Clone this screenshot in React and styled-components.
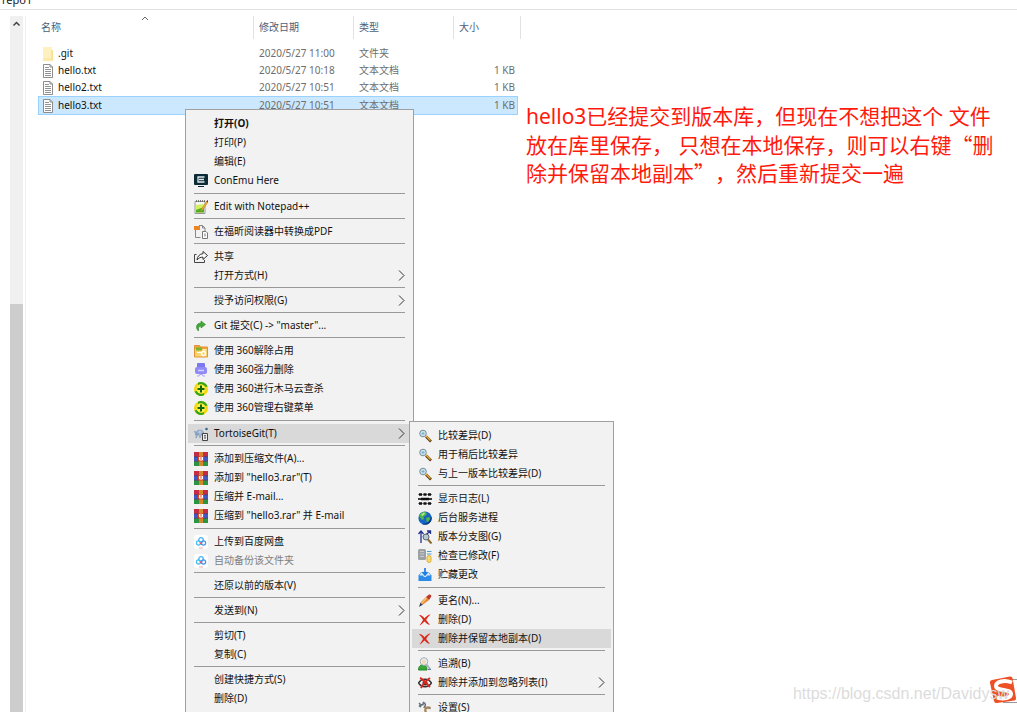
import { Fragment } from "react";
import styled, { createGlobalStyle } from "styled-components";

const files = [
  { name: ".git", date: "2020/5/27 11:00", type: "文件夹", size: "", folder: true },
  { name: "hello.txt", date: "2020/5/27 10:18", type: "文本文档", size: "1 KB" },
  { name: "hello2.txt", date: "2020/5/27 10:51", type: "文本文档", size: "1 KB" },
  { name: "hello3.txt", date: "2020/5/27 10:51", type: "文本文档", size: "1 KB", selected: true },
];

// every inner array is one group, groups are divided by a separator
const fileMenu = [
  [
    { label: "打开(O)", bold: true },
    { label: "打印(P)" },
    { label: "编辑(E)" },
    { label: "ConEmu Here", icon: "conemu" },
  ],
  [{ label: "Edit with Notepad++", icon: "notepad" }],
  [{ label: "在福昕阅读器中转换成PDF", icon: "pdf" }],
  [{ label: "共享", icon: "share" }, { label: "打开方式(H)", arrow: true }],
  [{ label: "授予访问权限(G)", arrow: true }],
  [{ label: 'Git 提交(C) -> "master"...', icon: "commit" }],
  [
    { label: "使用 360解除占用", icon: "folder360" },
    { label: "使用 360强力删除", icon: "shredder" },
    { label: "使用 360进行木马云查杀", icon: "plus360" },
    { label: "使用 360管理右键菜单", icon: "plus360" },
  ],
  [{ label: "TortoiseGit(T)", icon: "tortoise", arrow: true, active: true }],
  [
    { label: "添加到压缩文件(A)...", icon: "rar" },
    { label: '添加到 "hello3.rar"(T)', icon: "rar" },
    { label: "压缩并 E-mail...", icon: "rar" },
    { label: '压缩到 "hello3.rar" 并 E-mail', icon: "rar" },
  ],
  [
    { label: "上传到百度网盘", icon: "baidu" },
    { label: "自动备份该文件夹", icon: "baidu", disabled: true },
  ],
  [{ label: "还原以前的版本(V)" }],
  [{ label: "发送到(N)", arrow: true }],
  [{ label: "剪切(T)" }, { label: "复制(C)" }],
  [{ label: "创建快捷方式(S)" }, { label: "删除(D)" }],
];

const tortoiseMenu = [
  [
    { label: "比较差异(D)", icon: "diff" },
    { label: "用于稍后比较差异", icon: "diff" },
    { label: "与上一版本比较差异(D)", icon: "diff" },
  ],
  [
    { label: "显示日志(L)", icon: "log" },
    { label: "后台服务进程", icon: "globe" },
    { label: "版本分支图(G)", icon: "graph" },
    { label: "检查已修改(F)", icon: "check" },
    { label: "贮藏更改", icon: "stash" },
  ],
  [
    { label: "更名(N)...", icon: "rename" },
    { label: "删除(D)", icon: "remove" },
    { label: "删除并保留本地副本(D)", icon: "remove", active: true },
  ],
  [
    { label: "追溯(B)", icon: "blame" },
    { label: "删除并添加到忽略列表(I)", icon: "ignore", arrow: true },
  ],
  [{ label: "设置(S)", icon: "settings" }],
];

const icons = {
  conemu: (
    <>
      <rect x="0" y="0" width="14" height="11" rx="1" fill="#0d2b36" />
      <path d="M10.500 3H4v5h6.500M5 5.500h5" fill="none" stroke="#dfe9ec" strokeWidth="1.300" />
      <path d="M4 12.500h6" stroke="#0d2b36" />
    </>
  ),
  notepad: (
    <>
      <path d="M1 1.500h10v12H1z" fill="#f7f7f2" stroke="#999" />
      <path d="M2 1h9" stroke="#555" strokeWidth="1.500" strokeDasharray="1 1" />
      <path d="M2 5l8-1v8.500H2z" fill="#d3ee62" />
      <path d="M2 10l8-3v5.500H2z" fill="#4fae22" />
      <path d="M13 1L7.500 9l-1 2.500L9 9.500 14 2z" fill="#f0b429" stroke="#b07a22" strokeWidth=".5" />
      <path d="M12.200 1.500L13.500 0l1 .8-.8 1.700z" fill="#b12020" />
    </>
  ),
  pdf: (
    <>
      <path d="M1.500 4v8.500h5M5 .5h3.500L11 3v3" fill="none" stroke="#888" />
      <path d="M8.500.5V3H11" fill="none" stroke="#888" />
      <rect x="0" y="1" width="6" height="4" fill="#ee8420" />
      <path d="M8.500 6.500H12L13.500 8v5.500h-5z" fill="#fff" stroke="#777" />
      <path d="M11 8.500v3" stroke="#777" />
    </>
  ),
  share: (
    <>
      <path d="M2.500 4.500H.5v8h10V10" fill="none" stroke="#444" />
      <path d="M9 1.500l4.500 4L9 9.500V7.200C6.500 7 4.500 8 3 10c.3-3.500 2.500-6 6-6.300z" fill="#fafafa" stroke="#333" strokeLinejoin="round" />
    </>
  ),
  commit: (
    <path d="M7 2l4.500 3.500L7 9V7C5 7 4.200 8.500 4.500 12 1.500 9.500 1.500 4.300 7 4z" fill="#3fab36" stroke="#2b7f2a" strokeWidth=".6" />
  ),
  folder360: (
    <>
      <path d="M.5 1.500h5l1 1.500h7v10H.5z" fill="#f3a43a" stroke="#e09238" />
      <path d="M1 5h12v7.500H1z" fill="#fbd26b" />
      <path d="M2 3.500h6v3H2z" fill="#77b52d" />
      <path d="M3 8.500h4M9 6h3" stroke="#fff" />
      <circle cx="9.500" cy="9.500" r="2" fill="none" stroke="#fff" strokeWidth="1.300" />
    </>
  ),
  shredder: (
    <>
      <rect x="3" y="0" width="8" height="7" rx="1" fill="#7d78f0" />
      <rect x="1" y="4" width="12" height="7" rx="2" fill="#8f8af5" />
      <path d="M4 7.500h6" stroke="#d4d2ff" strokeWidth="1.500" />
      <path d="M3 13h2l.5-1.500h3L9 13h2" fill="none" stroke="#a9a5f6" />
    </>
  ),
  plus360: (
    <>
      <circle cx="7" cy="7" r="7" fill="#f3d60c" />
      <path d="M4 .7A7 7 0 0 1 13.500 4.500L11 5A5 5 0 0 0 4 3zM10 13.300A7 7 0 0 1 .5 9.500L3 9a5 5 0 0 0 7 2z" fill="#35a51b" />
      <circle cx="7" cy="7" r="4.500" fill="#fdf04a" />
      <path d="M7 3.500v7M3.500 7h7" stroke="#12660f" strokeWidth="2" />
    </>
  ),
  tortoise: (
    <>
      <path d="M1.500 8c0-3 2-5 4.500-5s4 2 4 5z" fill="#8ba6c9" stroke="#7590b5" strokeWidth=".7" />
      <path d="M3.500 5h5M6 3v5" stroke="#c5d6eb" />
      <path d="M0 4.500l2 1M3 8l-1 3M6 8v3" stroke="#8ba3c4" strokeWidth="1.500" />
      <circle cx="12.500" cy="2" r="1.300" fill="#3d648f" />
      <path d="M8.500 6.500h5v7h-5z" fill="#eee" stroke="#444" />
      <path d="M10 8.500h2M10 11h2M11 8.500v3" stroke="#555" strokeWidth=".8" />
    </>
  ),
  rar: (
    <>
      <rect width="14" height="4.700" fill="#c62b45" />
      <rect y="4.700" width="14" height="4.600" fill="#4259c4" />
      <rect y="9.300" width="14" height="4.700" fill="#2a9440" />
      <path d="M0 4.700h14M0 9.300h14" stroke="#3b173b" strokeWidth=".6" />
      <rect x="5" width="4" height="14" fill="#d58828" />
      <rect x="4" y="4" width="6" height="5.500" rx="1" fill="#e0431f" />
      <path d="M5.500 5v3h3V5M7 4.500v3" fill="none" stroke="#fff" />
    </>
  ),
  baidu: (
    <>
      <rect width="14" height="14" rx="3" fill="#fff" />
      <circle cx="7" cy="5" r="2.300" fill="none" stroke="#47b2f7" strokeWidth="1.300" />
      <circle cx="4.500" cy="8" r="2.100" fill="none" stroke="#43bdf5" strokeWidth="1.300" />
      <circle cx="9.500" cy="8" r="2.100" fill="none" stroke="#4795ee" strokeWidth="1.300" />
      <path d="M6 7.500L8 9.500" stroke="#ef5b70" strokeWidth="1.400" />
      <path d="M5 13h4" stroke="#f3a9b1" />
    </>
  ),
  diff: (
    <>
      <path d="M8 7.500l5 5" stroke="#5b3a12" strokeWidth="2.600" />
      <path d="M8 7l4.500 4.500" stroke="#e5a93b" strokeWidth="1.400" />
      <circle cx="5" cy="4.500" r="3.300" fill="#c3e5f2" stroke="#7b8b94" />
      <path d="M3.500 4.500h3M5 3v3" stroke="#78a3bb" strokeWidth=".8" />
    </>
  ),
  log: (
    <>
      <path d="M0 2.500h14M0 7h14M0 11.500h14" stroke="#888" />
      <path d="M1 2.500h3M5.500 2.500h3M10 2.500h3M3 7h8M1 11.500h3M5.500 11.500h3M10 11.500h3" stroke="#111" strokeWidth="2.300" />
      <path d="M0 7h14" stroke="#111" strokeWidth="1.500" />
    </>
  ),
  globe: (
    <>
      <circle cx="7" cy="7" r="6.600" fill="#1765c4" />
      <path d="M1 5C2.500 1.500 5 .5 7.500.8L9 3 7 5l-1.500.5L6 8l-2 1zM8 7l3-1 1.500 2-1.500 3.500L9 12z" fill="#4bb749" />
      <path d="M3 3.500l3-2 1 1L4.500 5z" fill="#b9e79b" />
      <path d="M13.400 5A6.600 6.600 0 0 1 4 12.900C9 13 12 10 13.400 5" fill="#093a82" />
    </>
  ),
  graph: (
    <>
      <path d="M3 13V1M.5 4L3 1l2.500 3M9 1h3.500v3M12.500 1L5 7" fill="none" stroke="#26308f" strokeWidth="1.300" />
      <circle cx="8" cy="7" r="3" fill="#b5c8d3" stroke="#5d6770" />
      <path d="M10 9.500l3.500 4" stroke="#8a6830" strokeWidth="2" />
    </>
  ),
  check: (
    <>
      <rect x="0" y="0" width="8" height="11" rx="1.500" fill="#9da1a3" />
      <path d="M2 2.500h4M2 5h4M2 7.500h4" stroke="#c9cccc" />
      <path d="M9 2.500h4.500M9 5h4.500" stroke="#4b9fce" strokeWidth="1.200" />
      <rect x="9" y="6.500" width="4" height="7" rx="2" fill="#f8dd6c" stroke="#dcae3d" />
    </>
  ),
  stash: (
    <>
      <path d="M.500 7.500L3 4.500h8l2.500 3V13H.500z" fill="#2d8be8" />
      <path d="M1.500 7.500H5L6 9h2l1-1.500h3.500L11 5H3z" fill="#d5eafd" />
      <path d="M7 0v6M4.500 4L7 7l2.500-3" fill="none" stroke="#197ce0" strokeWidth="1.700" />
    </>
  ),
  rename: (
    <>
      <path d="M1 13l1.500-4.500 2.500 2z" fill="#303b5a" />
      <path d="M2.500 8.500L8 3l3 3-6 4.500z" fill="#e8862a" />
      <path d="M3 9l5-5.500 1 1L4 10z" fill="#fac277" />
      <path d="M8 3l3-2.500c1.500-.5 3 1 2 2.500l-2 3z" fill="#bb382b" />
    </>
  ),
  remove: (
    <path d="M1 2c2-.5 4 1.500 5.500 3.200C8 3.500 10.500 1.500 12.500 1.500 11 3 9 5 8.200 7c1.300 2 2.500 3 3.800 5-2.500-.5-4-2-5.500-3.500C5 10 3.500 11.500 1.500 12.500c1.500-2 2.300-3.500 3.500-5.500C4 5 2.500 3.500 1 2" fill="#d92b1d" />
  ),
  blame: (
    <>
      <path d="M.5 13C.5 9 3 7.500 5 8c2 0 4 1 4 5z" fill="#38a936" stroke="#248426" />
      <circle cx="6" cy="4.500" r="3.800" fill="#e8edf0" stroke="#a9b0b5" />
      <path d="M4 5c0-3 4-3 4 0L7 7.500H5z" fill="#f5d9b7" />
      <path d="M8.500 7.500l4 5" stroke="#a6b2c0" strokeWidth="2" />
      <path d="M10 12.500h3" stroke="#667b9b" />
    </>
  ),
  ignore: (
    <>
      <path d="M.5 7c3-5 10-5 13 0-3 5-10 5-13 0z" fill="#eee" stroke="#333" strokeWidth="1.500" />
      <circle cx="7" cy="7" r="2.500" fill="#333" />
      <path d="M2 2c3 1 7 6 10 9M12 2C9 4 5 8 3 12" fill="none" stroke="#d82920" strokeWidth="2" />
    </>
  ),
  settings: (
    <>
      <path d="M1 2l2 2 2-.5.500-2C8 2 7.500 5 6.500 6l6 1.500M3 6L1 4.500" fill="none" stroke="#68727f" strokeWidth="1.600" />
      <path d="M12.500 7C8 5 5.500 8 9 13.500" fill="none" stroke="#a98658" strokeWidth="2.300" />
    </>
  ),
};

const Glyph = ({ name }) => (
  <Icon viewBox="0 0 14 14" aria-hidden="true">
    {icons[name]}
  </Icon>
);

const FileIcon = ({ folder }) => (
  <FileSvg viewBox="0 0 12 14" aria-hidden="true">
    {folder ? (
      <>
        <path d="M1 0h9v3h1v11H1z" fill="#ffe9a6" />
        <path d="M1 0h9v11H1z" fill="#fff0bf" />
        <path d="M10 3v10" stroke="#f3d88b" />
      </>
    ) : (
      <>
        <path d="M1.500.5H8L10.500 3v10.500h-9z" fill="#fff" stroke="#8d8d8d" />
        <path d="M8 .5V3h2.500" fill="none" stroke="#8d8d8d" />
        <path d="M3 3.500h4M3 5.500h6M3 7.500h6M3 9.500h6M3 11.500h6" stroke="#929292" />
      </>
    )}
  </FileSvg>
);

const ContextMenu = ({ groups, label, className }) => (
  <Menu className={className} role="menu" aria-label={label}>
    {groups.map((group, index) => (
      <Fragment key={index}>
        {index > 0 && <Separator $wide={groups[index - 1].length > 3} />}
        {group.map((item, i) => (
          <MenuItem
            key={i}
            type="button"
            role="menuitem"
            disabled={item.disabled}
            $active={item.active}
            $bold={item.bold}
          >
            <Glyph name={item.icon} />
            <span>{item.label}</span>
            {item.arrow && (
              <Chevron viewBox="0 0 7 11" aria-hidden="true">
                <path d="M1 .500l5 5-5 5" fill="none" stroke="#333" />
              </Chevron>
            )}
          </MenuItem>
        ))}
      </Fragment>
    ))}
  </Menu>
);

const App = () => {
  return (
    <Page lang="zh-CN">
      <GlobalStyle />
      <TitleBar>repo1</TitleBar>
      <Explorer>
        <ScrollBar>
          <svg width="13" height="16" viewBox="0 0 13 16" aria-hidden="true">
            <path d="M3.500 9.500l3-3 3 3" fill="none" stroke="#444" strokeWidth="1.500" />
          </svg>
          <Track />
          <Thumb />
        </ScrollBar>
        <FileArea>
          <FileTable>
            <colgroup>
              <col width="216" />
              <col width="100" />
              <col width="100" />
              <col width="64" />
              <col width="3" />
            </colgroup>
            <thead>
              <tr>
                <NameHead>
                  名称
                  <SortMark viewBox="0 0 8 5" aria-hidden="true">
                    <path d="M1 4l3-3 3 3" fill="none" stroke="#666" />
                  </SortMark>
                </NameHead>
                <Head>修改日期</Head>
                <Head>类型</Head>
                <Head $open>大小</Head>
                <Head as="td" />
              </tr>
            </thead>
            <tbody>
              {files.map((file) => (
                <FileRow key={file.name} $selected={file.selected}>
                  <NameCell>
                    <FileName>
                      <FileIcon folder={file.folder} />
                      {file.name}
                    </FileName>
                  </NameCell>
                  <Cell>{file.date}</Cell>
                  <Cell>{file.type}</Cell>
                  <SizeCell>{file.size}</SizeCell>
                </FileRow>
              ))}
            </tbody>
          </FileTable>
        </FileArea>
      </Explorer>

      <Note>
        <span>hello3已经提交到版本库，但现在不想把这个 文件</span>
        <span>
          放在库里保存， 只想在本地保存，则可以右键<Quote>“</Quote>删
        </span>
        <span>
          除并保留本地副本<Quote>”</Quote>，然后重新提交一遍
        </span>
      </Note>

      <FileMenu groups={fileMenu} label="hello3.txt" />
      <TortoiseMenu groups={tortoiseMenu} label="TortoiseGit" />

      <Logo viewBox="0 0 28 28" aria-hidden="true">
        <path d="M14 3.500h14M14 26.500h14" stroke="#999" />
        <path d="M3 4L21 .5q2-.3 2.500 1.500L27 22q.3 2-1.500 2.500L8 27q-2.500.5-3-2L1 7q-.5-2.500 2-3z" fill="#ee4f24" />
        <path d="M23 6.500C15 3.500 7 5.500 7 10c0 5.500 15 2.500 15 8 0 4-7 5.500-14 3.500" fill="none" stroke="#fff" strokeWidth="4" />
      </Logo>
      <Watermark>https://blog.csdn.net/Davidysw</Watermark>
    </Page>
  );
};

export default App;

const GlobalStyle = createGlobalStyle`
  * {
    box-sizing: border-box;
  }

  body {
    margin: 0;
    background: #fff;
    font-family: "Noto Sans", "Noto Sans CJK SC", sans-serif;
    font-size: 10px;
  }
`;

const Page = styled.main`
  position: relative;
  display: flex;
  flex-direction: column;
  height: 100vh;
  overflow: hidden;
`;

const TitleBar = styled.header`
  display: flex;
  flex: none;
  align-items: flex-end;
  height: 10px;
  padding: 0 2px 2px;
  border-bottom: 1px solid #e2e2e2;
  font-size: 11px;
  line-height: 14px;
  color: #222;
`;

const Explorer = styled.div`
  display: flex;
  flex: 1;
  padding: 6px 0 0 10px;
`;

const ScrollBar = styled.div`
  display: flex;
  flex-direction: column;
  width: 13px;
  background: #f0f0f0;
`;

const Track = styled.div`
  flex: 2;
`;

const Thumb = styled.div`
  flex: 3;
  background: #cdcdcd;
`;

const FileArea = styled.section`
  flex: 1;
  margin-left: 2px;
  padding-left: 12px;
  border-left: 1px solid #f0f0f0;
`;

const FileTable = styled.table`
  table-layout: fixed;
  width: 483px;
  border-spacing: 0;
  line-height: 17px;
  color: #6d6d6d;

  thead::after {
    content: "";
    display: block;
    height: 6px;
  }
`;

const Head = styled.th`
  height: 23px;
  padding: 0 0 0 5px;
  border-right: 1px solid ${({ $open }) => ($open ? "transparent" : "#e2e2e2")};
  font-weight: 400;
  text-align: left;
  color: #4c607a;
`;

const NameHead = styled(Head)`
  position: relative;
  padding-left: 3px;
`;

const SortMark = styled.svg`
  position: absolute;
  top: 0;
  left: 103px;
  width: 8px;
  height: 5px;
`;

const Cell = styled.td`
  padding: 0 0 0 5px;
  white-space: nowrap;
`;

const NameCell = styled(Cell)`
  padding-left: 4px;
  color: #111;
`;

const SizeCell = styled(Cell)`
  padding-right: 3px;
  text-align: right;
`;

const FileRow = styled.tr`
  ${Cell}, ${NameCell}, ${SizeCell} {
    background: ${({ $selected }) => ($selected ? "#cce8ff" : "transparent")};
    border: 0 solid #99d1ff;
    border-width: ${({ $selected }) => ($selected ? "1px 0" : "0")};
  }

  ${NameCell} {
    border-left-width: ${({ $selected }) => ($selected ? "1px" : "0")};
    padding-left: ${({ $selected }) => ($selected ? "3px" : "4px")};
  }

  ${SizeCell} {
    border-right-width: ${({ $selected }) => ($selected ? "1px" : "0")};
    padding-right: ${({ $selected }) => ($selected ? "2px" : "3px")};
  }
`;

const FileName = styled.div`
  display: flex;
  align-items: center;
  gap: 4px;
`;

const FileSvg = styled.svg`
  width: 12px;
  height: 14px;
`;

const Note = styled.p`
  position: absolute;
  top: 102px;
  left: 526px;
  display: grid;
  grid-auto-rows: 28px;
  margin: 0;
  font-size: 21px;
  line-height: 28px;
  white-space: nowrap;
  text-spacing-trim: space-all;
  color: #ff1a0d;
`;

const Quote = styled.span`
  font-family: "Noto Sans CJK SC", sans-serif;
`;

const Menu = styled.div`
  position: absolute;
  display: flex;
  flex-direction: column;
  padding: 4px 2px 20px;
  border: 1px solid #a0a0a0;
  background: #f2f2f2;
`;

const FileMenu = styled(ContextMenu)`
  top: 109px;
  left: 185px;
  width: 229px;
`;

const TortoiseMenu = styled(ContextMenu)`
  top: 421px;
  left: 409px;
  width: 205px;
`;

const MenuItem = styled.button`
  display: flex;
  flex: none;
  align-items: center;
  gap: 6px;
  height: 19px;
  padding: 0 6px;
  border: 0;
  background: ${({ $active }) => ($active ? "#d9d9d9" : "transparent")};
  font-family: inherit;
  font-size: 10px;
  font-weight: ${({ $bold }) => ($bold ? 700 : 400)};
  line-height: 19px;
  text-align: left;
  white-space: nowrap;
  color: #111;

  &:disabled {
    color: #808080;
  }
`;

const Separator = styled.hr`
  flex: none;
  width: auto;
  height: 1px;
  margin: ${({ $wide }) => ($wide ? "3px" : "2px")} 6px 3px;
  border: 0;
  background: #999;
`;

const Icon = styled.svg`
  flex: none;
  width: 14px;
  height: 14px;
`;

const Chevron = styled.svg`
  width: 7px;
  height: 11px;
  margin-left: auto;
`;

const Logo = styled.svg`
  position: absolute;
  right: 0;
  bottom: 8px;
  width: 28px;
  height: 28px;
`;

const Watermark = styled.div`
  position: absolute;
  right: 8px;
  bottom: 8px;
  font-family: "Liberation Sans", sans-serif;
  font-size: 16px;
  line-height: 20px;
  color: #dcdcdc;
`;
